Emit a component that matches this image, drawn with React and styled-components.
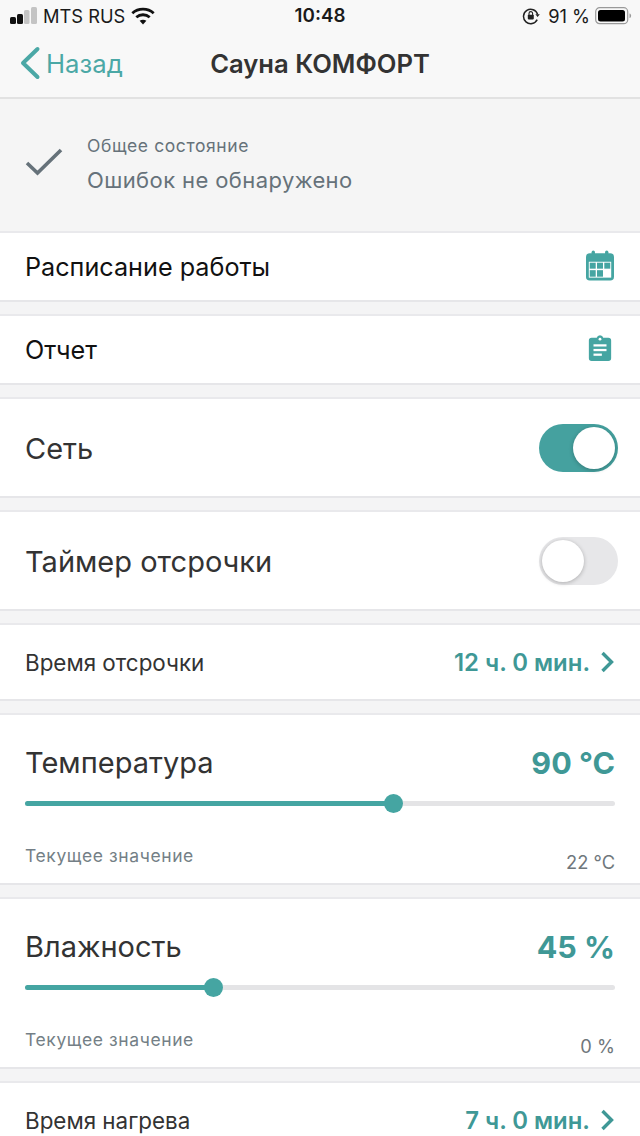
import styled, { createGlobalStyle } from "styled-components";

const GlobalStyle = createGlobalStyle`
html, body {
  margin: 0;
  padding: 0;
  background: #f4f4f5;
}
* {
  box-sizing: border-box;
}
`

const Page = styled.div`
width: 640px;
height: 1136px;
overflow: hidden;
font-family: Inter, "Noto Sans", sans-serif;
background: #f4f4f5;
`

const Header = styled.header`
height: 99px;
background: #f8f8f8;
border-bottom: 2px solid #e2e2e2;
`

const StatusBar = styled.div`
height: 31px;
display: flex;
align-items: center;
justify-content: space-between;
padding: 0 8px 0 10px;
font-size: 18.3px;
color: #1a1a1a;
position: relative;
`

const StatusSide = styled.div`
display: flex;
align-items: center;
gap: ${({ gap }) => gap}px;
`

const BatteryLevel = styled.span`
margin-left: 3px;
`

const Clock = styled.div`
position: absolute;
left: 0;
right: 0;
text-align: center;
font-weight: 600;
font-size: 18.8px;
`

const NavBar = styled.div`
height: 66px;
display: flex;
align-items: center;
padding: 0 0 2px 19px;
position: relative;
`

const BackLink = styled.div`
display: flex;
align-items: center;
gap: 5px;
color: #4ba8a6;
font-size: 25.7px;
`

const NavTitle = styled.div`
position: absolute;
left: 0;
right: 0;
text-align: center;
font-size: 25.6px;
font-weight: 600;
color: #333;
`

const StatePanel = styled.section`
height: 132px;
background: #f5f5f5;
display: flex;
padding: 35px 0 0 25px;
`

const StateIcon = styled.div`
width: 62px;
padding-top: 13px;
`

const StateText = styled.div`
display: flex;
flex-direction: column;
gap: 8px;
color: #66727a;
`

const StateLabel = styled.div`
font-size: 17.5px;
letter-spacing: 0.6px;
line-height: 24px;
`

const StateValue = styled.div`
font-size: 22px;
letter-spacing: 0.4px;
line-height: 28px;
`

const Card = styled.section`
height: ${({ h }) => h}px;
background: #fff;
border-top: 2px solid #e9e9ec;
border-bottom: 2px solid #e6e6e9;
margin-bottom: ${({ last }) => (last ? 0 : 12)}px;
`

const Row = styled(Card)`
display: flex;
align-items: center;
justify-content: space-between;
padding: 0 25px;
`

const RowLabel = styled.div`
font-size: ${({ size }) => size}px;
padding-top: ${({ size }) => (size > 28 ? 2 : 0)}px;
color: ${({ dark }) => (dark ? "#111" : "#333")};
`

const RowValue = styled.div`
display: flex;
align-items: center;
gap: 10px;
color: #3f9896;
font-size: 23.9px;
font-weight: 600;
`

const SliderCard = styled(Card)`
padding: 25px 25px 0;
position: relative;
`

const SliderHead = styled.div`
display: flex;
align-items: center;
justify-content: space-between;
height: 44px;
`

const SliderTitle = styled.div`
font-size: 29px;
color: #333;
`

const SliderValue = styled.div`
font-size: 30.5px;
font-weight: 700;
color: #3f9896;
`

const Track = styled.div`
height: 5px;
margin-top: 17px;
border-radius: 3px;
background: #e4e4e6;
position: relative;
`

const TrackFill = styled.div`
height: 100%;
border-radius: 3px;
background: #45a5a2;
`

const Thumb = styled.div`
position: absolute;
top: -7px;
width: 19px;
height: 19px;
margin-left: -9.5px;
border-radius: 50%;
background: #45a5a2;
`

const SliderFoot = styled.div`
display: flex;
justify-content: space-between;
margin-top: 39px;
font-size: 17.5px;
letter-spacing: 0.6px;
color: #747f86;
`

const Current = styled.div`
padding-top: 6px;
font-size: 18.3px;
letter-spacing: 0;
color: #6f777c;
`

const Switch = styled.div`
width: 79px;
height: 48px;
margin-right: -3px;
border-radius: 24px;
background: ${({ on }) => (on ? "#45a19f" : "#e7e7e9")};
position: relative;
`

const Knob = styled.div`
position: absolute;
top: 3px;
left: ${({ on }) => (on ? 34 : 3)}px;
width: 42px;
height: 42px;
border-radius: 50%;
background: #fff;
box-shadow: 0 1px 4px rgba(0, 0, 0, 0.25);
`

const IconSlot = styled.div`
display: flex;
margin: 0 ${({ right }) => right}px 3px 0;
`

const SignalBars = () => (
  <svg width="27" height="17" viewBox="0 0 27 17">
    <rect x="0" y="10" width="6" height="7" rx="1.5" fill="#111" />
    <rect x="7" y="7" width="6" height="10" rx="1.5" fill="#111" />
    <rect x="14" y="3" width="5.5" height="14" rx="1.5" fill="#c4c4c4" />
    <rect x="21" y="0" width="6" height="17" rx="1.5" fill="#c4c4c4" />
  </svg>
)

const Wifi = () => (
  <svg width="24" height="18" viewBox="0 0 24 18" fill="none" stroke="#111" strokeWidth="2.8">
    <path d="M1.3 6.2C7.3 .8 16.7 .8 22.7 6.2" />
    <path d="M5.3 10.3C9.2 6.9 14.8 6.9 18.7 10.3" />
    <path d="M12 17.5L8.6 13.8C10.6 12.3 13.4 12.3 15.4 13.8Z" fill="#111" stroke="none" />
  </svg>
)

const RotationLock = () => (
  <svg width="18" height="18" viewBox="0 0 18 18" fill="none">
    <path d="M15.6 7.4A7.2 7.2 0 1 0 15.2 12.6" stroke="#222" strokeWidth="1.5" />
    <path d="M13.4 7.2L17.8 7.2L15.6 10Z" fill="#222" />
    <rect x="5.8" y="7.8" width="6" height="4.6" rx="0.8" fill="#222" />
    <path d="M7 8V6.4a1.8 1.8 0 0 1 3.6 0V8" stroke="#222" strokeWidth="1.1" />
  </svg>
)

const Battery = () => (
  <svg width="37" height="18" viewBox="0 0 37 18">
    <rect x="0.7" y="0.7" width="32" height="16" rx="4" fill="none" stroke="#9a9a9a" strokeWidth="1.2" />
    <rect x="3" y="3" width="27" height="11.5" rx="2.5" fill="#000" />
    <path d="M34.5 6.5c1.2.4 1.6 1.2 1.6 2.3s-.4 1.9-1.6 2.3Z" fill="#9a9a9a" />
  </svg>
)

const BackChevron = () => (
  <svg width="22" height="34" viewBox="0 0 22 34" fill="none">
    <path d="M18.5 3L4 17L18.5 31" stroke="#4ba8a6" strokeWidth="4" strokeLinecap="round" strokeLinejoin="round" />
  </svg>
)

const CheckMark = () => (
  <svg width="38" height="30" viewBox="0 0 38 30" fill="none">
    <path d="M2 16L12.5 26L36 3" stroke="#66727a" strokeWidth="3.6" />
  </svg>
)

const CalendarIcon = () => (
  <svg width="28" height="31" viewBox="0 0 30 32">
    <rect x="6" y="0" width="3.6" height="6" rx="1.8" fill="#45a5a2" />
    <rect x="20.4" y="0" width="3.6" height="6" rx="1.8" fill="#45a5a2" />
    <rect x="0" y="3" width="30" height="29" rx="4" fill="#45a5a2" />
    <rect x="3" y="12" width="24" height="17" fill="#fff" />
    <rect x="4" y="13" width="6.4" height="6.4" fill="#45a5a2" />
    <rect x="11.8" y="13" width="6.4" height="6.4" fill="#45a5a2" />
    <rect x="19.6" y="13" width="6.4" height="6.4" fill="#45a5a2" />
    <rect x="4" y="21" width="6.4" height="7" fill="#45a5a2" />
    <rect x="11.8" y="21" width="6.4" height="7" fill="#45a5a2" />
  </svg>
)

const ClipboardIcon = () => (
  <svg width="24" height="26" viewBox="0 0 24 28">
    <path d="M3 3h5.5a3.6 3.6 0 0 1 7 0H21a3 3 0 0 1 3 3v19a3 3 0 0 1-3 3H3a3 3 0 0 1-3-3V6a3 3 0 0 1 3-3Z" fill="#45a5a2" />
    <circle cx="12" cy="4.5" r="1.5" fill="#fff" />
    <rect x="5" y="10" width="14" height="2.4" fill="#fff" />
    <rect x="5" y="15" width="14" height="2.4" fill="#fff" />
    <rect x="5" y="20" width="9" height="2.4" fill="#fff" />
  </svg>
)

const Chevron = () => (
  <svg width="15" height="22" viewBox="0 0 15 22" fill="none">
    <path d="M2.5 2L11.5 11L2.5 20" stroke="#3f9896" strokeWidth="3.4" />
  </svg>
)

const SliderBlock = ({ title, value, percent, current }) => (
  <SliderCard h={172}>
    <SliderHead>
      <SliderTitle>{title}</SliderTitle>
      <SliderValue>{value}</SliderValue>
    </SliderHead>
    <Track>
      <TrackFill style={{ width: `${percent}%` }} />
      <Thumb style={{ left: `${percent}%` }} />
    </Track>
    <SliderFoot>
      <div>Текущее значение</div>
      <Current>{current}</Current>
    </SliderFoot>
  </SliderCard>
)

export default function App() {
  return (
    <Page>
      <GlobalStyle />
      <Header>
        <StatusBar>
          <StatusSide gap={6}>
            <SignalBars />
            <span>MTS RUS</span>
            <Wifi />
          </StatusSide>
          <Clock>10:48</Clock>
          <StatusSide gap={5}>
            <RotationLock />
            <BatteryLevel>91 %</BatteryLevel>
            <Battery />
          </StatusSide>
        </StatusBar>
        <NavBar>
          <BackLink>
            <BackChevron />
            <span>Назад</span>
          </BackLink>
          <NavTitle>Сауна КОМФОРТ</NavTitle>
        </NavBar>
      </Header>
      <StatePanel>
        <StateIcon>
          <CheckMark />
        </StateIcon>
        <StateText>
          <StateLabel>Общее состояние</StateLabel>
          <StateValue>Ошибок не обнаружено</StateValue>
        </StateText>
      </StatePanel>
      <Row h={71}>
        <RowLabel size={25.2} dark>Расписание работы</RowLabel>
        <IconSlot right={1}>
          <CalendarIcon />
        </IconSlot>
      </Row>
      <Row h={71}>
        <RowLabel size={25.2} dark>Отчет</RowLabel>
        <IconSlot right={3}>
          <ClipboardIcon />
        </IconSlot>
      </Row>
      <Row h={101}>
        <RowLabel size={29}>Сеть</RowLabel>
        <Switch on>
          <Knob on />
        </Switch>
      </Row>
      <Row h={101}>
        <RowLabel size={29}>Таймер отсрочки</RowLabel>
        <Switch>
          <Knob />
        </Switch>
      </Row>
      <Row h={78}>
        <RowLabel size={22.4}>Время отсрочки</RowLabel>
        <RowValue>
          12 ч. 0 мин.
          <Chevron />
        </RowValue>
      </Row>
      <SliderBlock title="Температура" value="90 °C" percent={62.4} current="22 °C" />
      <SliderBlock title="Влажность" value="45 %" percent={31.9} current="0 %" />
      <Row h={78} last>
        <RowLabel size={22.4}>Время нагрева</RowLabel>
        <RowValue>
          7 ч. 0 мин.
          <Chevron />
        </RowValue>
      </Row>
    </Page>
  )
}
